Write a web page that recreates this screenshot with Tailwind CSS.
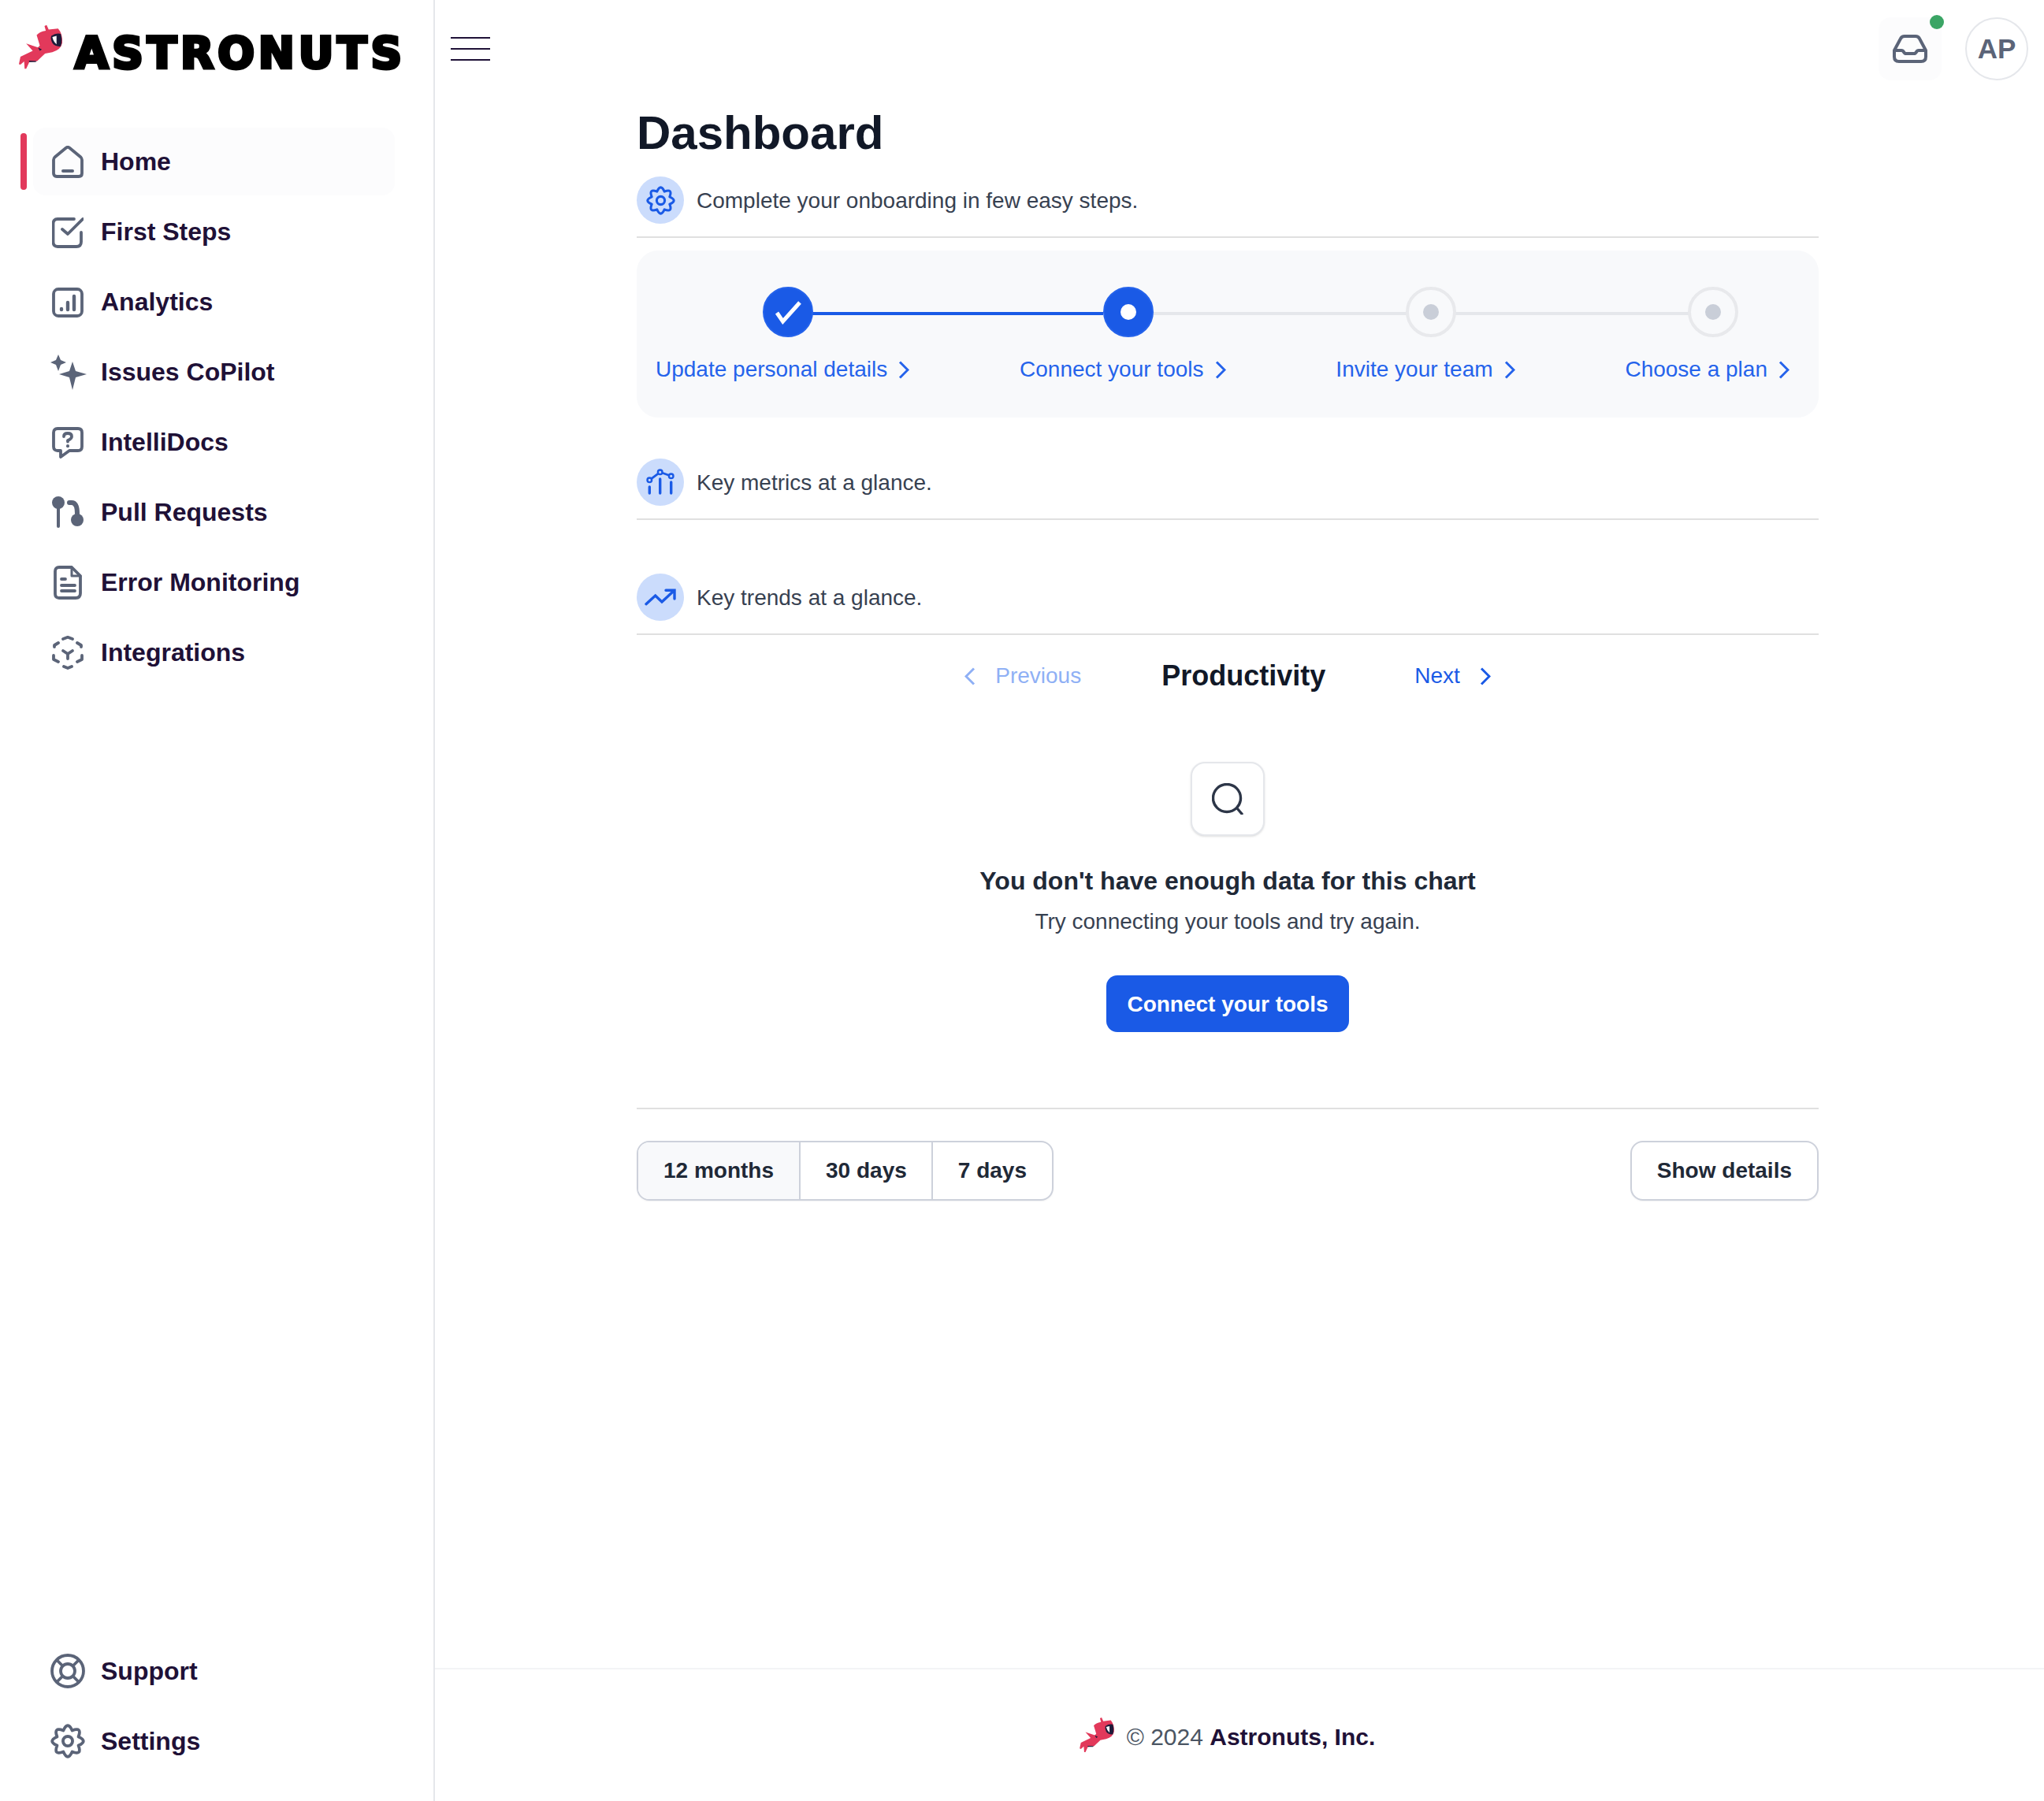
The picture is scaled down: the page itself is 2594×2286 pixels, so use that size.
<!DOCTYPE html>
<html lang="en">
<head>
    <meta charset="UTF-8">
    <title>Astronuts Dashboard</title>
    <script src="https://cdn.jsdelivr.net/npm/@tailwindcss/browser@4"></script>
</head>
<body class="bg-white [font-family:'Liberation_Sans',Arial,sans-serif]">
<div class="flex h-[2286px] w-[2594px] overflow-hidden">

    <!-- Sidebar -->
    <aside class="w-[552px] shrink-0 border-r-2 border-[#e5e7eb] flex flex-col">
        <div class="h-[162px] flex items-start pt-[28px] pl-[20px]">
            <svg class="w-[63px] h-[63px] shrink-0" viewBox="60 55 190 190">
                <path fill="#e2395b" d="M170 70 L178 66 L186 84 L222 80 Q240 100 238 135 Q232 162 200 170 L172 176 L142 204 L112 208 L100 234 L94 234 L92 206 L78 218 L72 216 L78 188 L125 165 L100 137 L145 152 L152 145 L140 105 Q150 92 175 88 Z"/>
                <path fill="#1e1b3a" d="M196 108 Q215 95 232 100 Q240 125 232 148 Q210 150 200 135 Q192 120 196 108 Z M145 152 L160 160 L152 165 Z M110 203 L140 204 L136 208 L112 208 Z"/>
                <path fill="#fff" d="M200 112 L216 108 L216 140 Q204 130 200 112 Z"/>
            </svg>
            <span class="ml-[12px] mt-[6px] text-[55px] leading-[66px] font-bold tracking-[4.8px] text-black [font-family:'DejaVu_Sans',sans-serif] [-webkit-text-stroke:4px_black]">ASTRONUTS</span>
        </div>

        <nav class="flex flex-col gap-[3px] text-[32px] font-bold text-[#1f1137]">
            <div class="flex items-center ml-[26px] w-[475px] h-[86px]">
                <span class="w-2 h-[72px] rounded-full bg-[#e2395b]"></span>
                <a class="ml-2 flex-1 h-[86px] flex items-center pl-6 gap-[22px] bg-[#fcfcfd] rounded-2xl">
                    <svg class="w-10 h-[41px]" viewBox="0 0 40 41" fill="none" stroke="#5b6478" stroke-width="3.8" stroke-linejoin="round" stroke-linecap="round"><path d="M2 18 Q2 16 3.5 14.5 L18 2.5 Q20 1 22 2.5 L36.5 14.5 Q38 16 38 18 V35 Q38 39 34 39 H6 Q2 39 2 35 Z"/><path d="M14 32 H26" stroke-width="4"/></svg>
                    <span>Home</span>
                </a>
            </div>
            <a class="ml-[42px] h-[86px] flex items-center pl-6 gap-[22px]">
                <svg class="w-10 h-10 mt-[2px]" viewBox="0 0 40 40" fill="none" stroke="#5b6478" stroke-width="3.8" stroke-linejoin="round" stroke-linecap="round"><path d="M37 20 V32 Q37 38 31 38 H7 Q1.500 38 1.500 32 V9 Q1.500 3 7 3 H28"/><path d="M13 16 L20 22 L39 3"/></svg>
                <span>First Steps</span>
            </a>
            <a class="ml-[42px] h-[86px] flex items-center pl-6 gap-[22px]">
                <svg class="w-10 h-10 mt-[2px]" viewBox="0 0 40 40" fill="none" stroke="#5b6478" stroke-width="3.8" stroke-linecap="round"><rect x="2" y="3" width="36" height="34" rx="6"/><path d="M12 28 V29 M20 20 V29 M28 12 V29" stroke-width="4.400"/></svg>
                <span>Analytics</span>
            </a>
            <a class="ml-[42px] h-[86px] flex items-center pl-[22px] gap-[18px]">
                <svg class="w-[46px] h-[46px] mt-[2px]" viewBox="0 0 46 46" fill="#5b6478"><path d="M10 0 L13 7 L20 10 L13 13 L10 21 L7 13 L0 10 L7 7 Z"/><path d="M28 9 L32 21 L46 25 L32 29 L28 45 L24 29 L11 25 L24 21 Z"/></svg>
                <span>Issues CoPilot</span>
            </a>
            <a class="ml-[42px] h-[86px] flex items-center pl-6 gap-[22px]">
                <svg class="w-10 h-10 mt-[2px]" viewBox="0 0 40 40" fill="none" stroke="#5b6478" stroke-width="3.8" stroke-linejoin="round" stroke-linecap="round"><path d="M7 2 H33 Q38 2 38 7 V25 Q38 30 33 30 H22 L11 38 V30 H7 Q2 30 2 25 V7 Q2 2 7 2 Z"/><path d="M15 12 Q15 8 20 8 Q25 8 25 12 Q25 15 20 17 V18.500"/><path d="M20 24 V24.200" stroke-width="4"/></svg>
                <span>IntelliDocs</span>
            </a>
            <a class="ml-[42px] h-[86px] flex items-center pl-6 gap-[22px]">
                <svg class="w-10 h-10" viewBox="0 0 40 40" fill="#5b6478" stroke-linecap="round"><circle cx="8" cy="8" r="8"/><circle cx="32" cy="30" r="8"/><path d="M8 10 V38" stroke="#5b6478" stroke-width="4" fill="none"/><path d="M22 8 H25 Q32 8 32 22" stroke="#5b6478" stroke-width="6" fill="none"/></svg>
                <span>Pull Requests</span>
            </a>
            <a class="ml-[42px] h-[86px] flex items-center pl-[26px] gap-[24px]">
                <svg class="w-9 h-[43px]" viewBox="0 0 36 43" fill="none" stroke="#5b6478" stroke-width="3.8" stroke-linejoin="round" stroke-linecap="round"><path d="M7 2 H23 L34 13 V35 Q34 41 28 41 H7 Q2 41 2 36 V7 Q2 2 7 2 Z"/><path d="M23 2 V13 H34" stroke-width="3"/><path d="M10 17 H15 M10 25 H27 M10 32 H27"/></svg>
                <span>Error Monitoring</span>
            </a>
            <a class="ml-[42px] h-[86px] flex items-center pl-6 gap-[22px]">
                <svg class="w-10 h-[43px]" viewBox="0 0 40 43" fill="none" stroke="#5b6478" stroke-width="3.8" stroke-linejoin="round" stroke-linecap="round"><path d="M14 4 L20 1.800 L26 4 M15 39 L20 41 L25 39 M8 9 L3 12 V14 M32 9 L37 12 V14 M2 25 V30 L8 33 M38 25 V30 L32 33"/><path d="M14 19 L20 23 L26 19 M20 23 V29"/></svg>
                <span>Integrations</span>
            </a>
        </nav>

        <div class="mt-auto mb-[33px] flex flex-col gap-[3px] text-[32px] font-bold text-[#1f1137]">
            <a class="h-[86px] flex items-center pl-[64px] gap-[20px]">
                <svg class="w-11 h-11" viewBox="0 0 44 44" fill="none" stroke="#5b6478" stroke-width="3.800"><circle cx="22" cy="22" r="20"/><circle cx="22" cy="22" r="9"/><path d="M8 8 L15.500 15.500 M36 8 L28.500 15.500 M8 36 L15.500 28.500 M36 36 L28.500 28.500"/></svg>
                <span>Support</span>
            </a>
            <a class="h-[86px] flex items-center pl-[64px] gap-[20px]">
                <svg class="w-11 h-11" viewBox="0 0 24 24" fill="none" stroke="#5b6478" stroke-width="2.100" stroke-linejoin="round"><path d="M19.39 8.94 Q26.2 12 19.39 15.06 Q22.04 22.04 15.06 19.39 Q12 26.2 8.94 19.39 Q1.96 22.04 4.61 15.06 Q-2.2 12 4.61 8.94 Q1.96 1.96 8.94 4.61 Q12 -2.2 15.06 4.61 Q22.04 1.96 19.39 8.94 Z"/><circle cx="12" cy="12" r="3.300"/></svg>
                <span>Settings</span>
            </a>
        </div>
    </aside>

    <!-- Main -->
    <div class="flex-1 flex flex-col min-w-0">
        <header class="h-[124px] shrink-0 flex items-start pt-[22px] pl-5 pr-5">
            <div class="mt-[25px] w-[50px] flex flex-col gap-[12px]">
                <span class="block h-[2px] bg-[#1f1137]"></span>
                <span class="block h-[2px] bg-[#1f1137]"></span>
                <span class="block h-[2px] bg-[#1f1137]"></span>
            </div>
            <div class="relative ml-auto w-20 h-20 rounded-2xl bg-[#fcfcfd] flex items-center justify-center">
                <svg class="w-11 h-9" viewBox="0 0 44 36" fill="none" stroke="#5b6478" stroke-width="4" stroke-linejoin="round"><path d="M2 20 L10 5 Q11.500 2 15 2 H29 Q32.500 2 34 5 L42 20 V28 Q42 34 36 34 H8 Q2 34 2 28 Z"/><path d="M2 20 H11 Q13 20 14 22 Q15 24 17 24 H27 Q29 24 30 22 Q31 20 33 20 H42"/></svg>
                <span class="absolute -top-[3px] -right-[3px] w-[18px] h-[18px] rounded-full bg-[#3ba565]"></span>
            </div>
            <div class="ml-[30px] w-20 h-20 rounded-full border-2 border-[#e5e7eb] flex items-center justify-center text-[35px] font-bold text-[#5b6478]">AP</div>
        </header>

        <main class="flex-1 ml-[256px] w-[1500px]">
            <h1 class="mt-[15px] h-[60px] leading-[60px] text-[60px] font-bold text-[#111827]">Dashboard</h1>

            <div class="mt-[25px] pb-4 border-b-2 border-[#e0e0e0] flex items-center gap-4">
                <div class="w-[60px] h-[60px] rounded-full bg-[#cbdcfc] flex items-center justify-center">
                    <svg class="w-[37px] h-[37px]" viewBox="0 0 24 24" fill="none" stroke="#1a5ae6" stroke-width="2" stroke-linejoin="round"><path d="M19.39 8.94 Q26.2 12 19.39 15.06 Q22.04 22.04 15.06 19.39 Q12 26.2 8.94 19.39 Q1.96 22.04 4.61 15.06 Q-2.2 12 4.61 8.94 Q1.96 1.96 8.94 4.61 Q12 -2.2 15.06 4.61 Q22.04 1.96 19.39 8.94 Z"/><circle cx="12" cy="12" r="3.300"/></svg>
                </div>
                <p class="mt-[2px] text-[28px] text-[#374151]">Complete your onboarding in few easy steps.</p>
            </div>

            <!-- Stepper -->
            <div class="relative mt-4 h-[212px] rounded-[27px] bg-[#f8f9fb] pt-[46px] pl-[24px] pr-[23px] flex justify-between">
                <span class="absolute top-[78px] left-[223px] w-[369px] h-1 bg-[#1a5ae6]"></span>
                <span class="absolute top-[78px] left-[654px] w-[323px] h-1 bg-[#e5e7eb]"></span>
                <span class="absolute top-[78px] left-[1039px] w-[296px] h-1 bg-[#e5e7eb]"></span>

                <div class="flex flex-col items-center">
                    <div class="relative w-16 h-16 rounded-full bg-[#1a5ae6] border-2 border-[#2563eb]">
                        <svg class="absolute -inset-[2px] w-16 h-16" viewBox="0 0 64 64" fill="none" stroke="#fff" stroke-width="5"><path d="M18 33 L25.500 44 L47 20"/></svg>
                    </div>
                    <a class="mt-[21px] h-10 flex items-center gap-[14px] text-[28px] text-[#2563eb]">Update personal details
                        <svg class="w-[14px] h-[23px]" viewBox="0 0 14 23" fill="none" stroke="#2563eb" stroke-width="3"><path d="M2 1.500 L12 11.500 L2 21.500"/></svg>
                        <span class="w-0"></span></a>
                </div>
                <div class="flex flex-col items-center">
                    <div class="relative w-16 h-16 rounded-full bg-[#1a5ae6] border-2 border-[#2563eb] flex items-center justify-center"><span class="w-5 h-5 rounded-full bg-white"></span></div>
                    <a class="mt-[21px] h-10 flex items-center gap-[14px] text-[28px] text-[#2563eb]">Connect your tools
                        <svg class="w-[14px] h-[23px]" viewBox="0 0 14 23" fill="none" stroke="#2563eb" stroke-width="3"><path d="M2 1.500 L12 11.500 L2 21.500"/></svg>
                        <span class="w-0"></span></a>
                </div>
                <div class="flex flex-col items-center">
                    <div class="relative w-16 h-16 rounded-full bg-[#f8f9fb] border-4 border-[#e8e9ec] flex items-center justify-center"><span class="w-5 h-5 rounded-full bg-[#c9ced8]"></span></div>
                    <a class="mt-[21px] h-10 flex items-center gap-[14px] text-[28px] text-[#2563eb]">Invite your team
                        <svg class="w-[14px] h-[23px]" viewBox="0 0 14 23" fill="none" stroke="#2563eb" stroke-width="3"><path d="M2 1.500 L12 11.500 L2 21.500"/></svg>
                        <span class="w-0"></span></a>
                </div>
                <div class="flex flex-col items-center">
                    <div class="relative w-16 h-16 rounded-full bg-[#f8f9fb] border-4 border-[#e8e9ec] flex items-center justify-center"><span class="w-5 h-5 rounded-full bg-[#c9ced8]"></span></div>
                    <a class="mt-[21px] h-10 flex items-center gap-[14px] text-[28px] text-[#2563eb]">Choose a plan
                        <svg class="w-[14px] h-[23px]" viewBox="0 0 14 23" fill="none" stroke="#2563eb" stroke-width="3"><path d="M2 1.500 L12 11.500 L2 21.500"/></svg>
                        <span class="w-0"></span></a>
                </div>
            </div>

            <div class="mt-[52px] pb-4 border-b-2 border-[#e0e0e0] flex items-center gap-4">
                <svg class="w-[60px] h-[60px]" viewBox="0 0 60 60"><circle cx="30" cy="30" r="30" fill="#cbdcfc"/><g fill="none" stroke="#1a5ae6" stroke-linecap="round"><path d="M16.300 36 V44 M29.700 26 V44 M43.700 30 V44" stroke-width="3.400"/><path d="M16.300 27.300 L29.700 17.300 L43.700 22.300" stroke-width="2.800"/><circle cx="16.300" cy="27.300" r="2.800" stroke-width="2.400" fill="#cbdcfc"/><circle cx="29.700" cy="17.300" r="2.800" stroke-width="2.400" fill="#cbdcfc"/><circle cx="43.700" cy="22.300" r="2.800" stroke-width="2.400" fill="#cbdcfc"/></g></svg>
                <p class="mt-[2px] text-[28px] text-[#374151]">Key metrics at a glance.</p>
            </div>

            <div class="mt-[68px] pb-4 border-b-2 border-[#e0e0e0] flex items-center gap-4">
                <svg class="w-[60px] h-[60px]" viewBox="0 0 60 60"><circle cx="30" cy="30" r="30" fill="#cbdcfc"/><path d="M12 38.700 L23.700 28 L32 36 L47 22 M37 21.300 H48 V32" fill="none" stroke="#1a5ae6" stroke-width="3.400" stroke-linecap="round"/></svg>
                <p class="mt-[2px] text-[28px] text-[#374151]">Key trends at a glance.</p>
            </div>

            <!-- Chart nav -->
            <div class="mt-[22px] h-[60px] flex items-center justify-center text-[28px]">
                <svg class="w-[14px] h-[23px]" viewBox="0 0 14 23" fill="none" stroke="#8fb0f5" stroke-width="3"><path d="M12 1.500 L2 11.500 L12 21.500"/></svg>
                <span class="ml-[25px] text-[#8fb0f5]">Previous</span>
                <span class="ml-[102px] text-[36px] font-bold text-[#111827]">Productivity</span>
                <span class="ml-[113px] text-[#1a5ae6]">Next</span>
                <svg class="ml-[25px] w-[14px] h-[23px]" viewBox="0 0 14 23" fill="none" stroke="#1a5ae6" stroke-width="3"><path d="M2 1.500 L12 11.500 L2 21.500"/></svg>
            </div>

            <!-- Empty state -->
            <div class="flex flex-col items-center">
                <div class="mt-[79px] w-[94px] h-[94px] rounded-[18px] border-2 border-[#e5e7eb] bg-white shadow-sm flex items-center justify-center">
                    <svg class="w-10 h-10" viewBox="0 0 40 40" fill="none" stroke="#2d3648" stroke-width="3.400" stroke-linecap="round"><circle cx="19" cy="19" r="17.500"/><path d="M32 32 L38 39"/></svg>
                </div>
                <h2 class="mt-[37px] h-10 leading-10 text-[32px] font-bold text-[#1f2937]">You don't have enough data for this chart</h2>
                <p class="mt-3 h-10 leading-10 text-[28px] text-[#374151]">Try connecting your tools and try again.</p>
                <button class="mt-12 w-[308px] h-[72px] pt-[2px] rounded-[14px] bg-[#1a5ae6] text-white text-[28px] font-bold">Connect your tools</button>
            </div>

            <div class="mt-24 border-t-2 border-[#e0e0e0]"></div>

            <div class="mt-10 flex justify-between text-[28px] font-bold text-[#1f2937]">
                <div class="h-[76px] flex rounded-2xl border-2 border-[#cdd1db] overflow-hidden shadow-xs">
                    <span class="pl-[32px] pr-[32px] flex items-center bg-[#f8f9fb] border-r-2 border-[#cdd1db]">12 months</span>
                    <span class="pl-[32px] pr-[31px] flex items-center border-r-2 border-[#cdd1db]">30 days</span>
                    <span class="px-[32px] flex items-center">7 days</span>
                </div>
                <button class="h-[76px] px-[32px] rounded-2xl border-2 border-[#cdd1db] shadow-xs">Show details</button>
            </div>
        </main>

        <footer class="h-[169px] shrink-0 border-t-2 border-[#f3f4f6] flex justify-center pt-[61px] pr-[34px]">
            <div class="flex items-start">
                <svg class="w-[50px] h-[50px] -mt-[3px]" viewBox="60 55 190 190">
                    <path fill="#e2395b" d="M170 70 L178 66 L186 84 L222 80 Q240 100 238 135 Q232 162 200 170 L172 176 L142 204 L112 208 L100 234 L94 234 L92 206 L78 218 L72 216 L78 188 L125 165 L100 137 L145 152 L152 145 L140 105 Q150 92 175 88 Z"/>
                    <path fill="#1e1b3a" d="M196 108 Q215 95 232 100 Q240 125 232 148 Q210 150 200 135 Q192 120 196 108 Z M145 152 L160 160 L152 165 Z M110 203 L140 204 L136 208 L112 208 Z"/>
                    <path fill="#fff" d="M200 112 L216 108 L216 140 Q204 130 200 112 Z"/>
                </svg>
                <p class="ml-[13px] h-[50px] leading-[50px] text-[30px] text-[#4b5563]">© 2024 <span class="font-bold text-[#1f1137]">Astronuts, Inc.</span></p>
            </div>
        </footer>
    </div>
</div>
</body>
</html>
